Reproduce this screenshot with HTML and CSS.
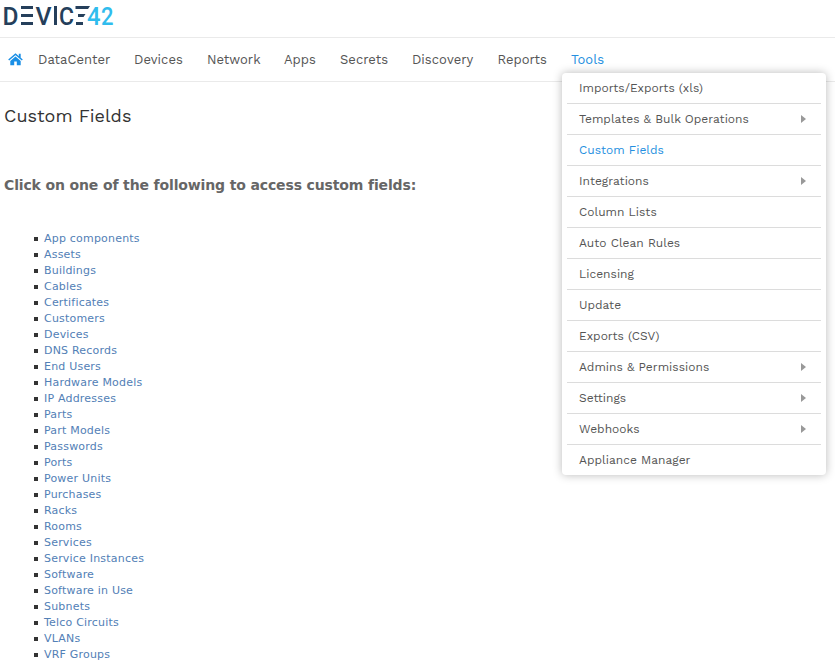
FILE: index.html
```html
<!DOCTYPE html>
<html lang="en">
<head>
<meta charset="utf-8">
<title>Custom Fields</title>
<link rel="stylesheet" href="styles.css">
</head>
<body>
<header class="brand">
  <svg class="logo" width="120" height="34" viewBox="0 0 120 34" role="img" aria-label="Device42">
    <g class="logo-dark">
      <text x="2.500" y="25" textLength="16" lengthAdjust="spacingAndGlyphs">D</text>
      <path d="M21 6h12v3H21zM21 14h12v3H21zM21 22h12v3H21z"/>
      <text x="35.500" y="25" textLength="16" lengthAdjust="spacingAndGlyphs">V</text>
      <path d="M54 6h3V25h-3z"/>
      <text x="59" y="25" textLength="15" lengthAdjust="spacingAndGlyphs">C</text>
      <path d="M75.500 6H90l-2 3H75.500zM78 14h7.500l-2 3H78zM76 22h7v3h-7z"/>
    </g>
    <g class="logo-cyan">
      <text x="87" y="25" textLength="13.500" lengthAdjust="spacingAndGlyphs">4</text>
      <text x="101" y="25" textLength="12.500" lengthAdjust="spacingAndGlyphs">2</text>
    </g>
  </svg>
</header>
<nav class="nav">
  <a class="home" href="#" aria-label="Home"><svg width="15" height="13" viewBox="0 0 15 13"><path d="M7.500 3.600 2.300 7.900V12.200h3.900V8.600h2.600v3.600h3.900V7.900z"/><path class="roof" d="M.700 7 7.500 1.300 14.300 7"/><path d="M10.800.7h1.900v4h-1.900z"/></svg></a>
  <a href="#">DataCenter</a><a href="#">Devices</a><a href="#">Network</a><a href="#">Apps</a><a href="#">Secrets</a><a href="#">Discovery</a><a href="#">Reports</a>
  <div class="tools">
    <a class="active" href="#">Tools</a>
    <ul class="menu">
      <li>Imports/Exports (xls)</li>
      <li class="sub">Templates &amp; Bulk Operations</li>
      <li class="active">Custom Fields</li>
      <li class="sub">Integrations</li>
      <li>Column Lists</li>
      <li>Auto Clean Rules</li>
      <li>Licensing</li>
      <li>Update</li>
      <li>Exports (CSV)</li>
      <li class="sub">Admins &amp; Permissions</li>
      <li class="sub">Settings</li>
      <li class="sub">Webhooks</li>
      <li>Appliance Manager</li>
    </ul>
  </div>
</nav>
<main>
  <h1>Custom Fields</h1>
  <h2>Click on one of the following to access custom fields:</h2>
  <ul class="fields">
    <li><a href="#">App components</a></li>
    <li><a href="#">Assets</a></li>
    <li><a href="#">Buildings</a></li>
    <li><a href="#">Cables</a></li>
    <li><a href="#">Certificates</a></li>
    <li><a href="#">Customers</a></li>
    <li><a href="#">Devices</a></li>
    <li><a href="#">DNS Records</a></li>
    <li><a href="#">End Users</a></li>
    <li><a href="#">Hardware Models</a></li>
    <li><a href="#">IP Addresses</a></li>
    <li><a href="#">Parts</a></li>
    <li><a href="#">Part Models</a></li>
    <li><a href="#">Passwords</a></li>
    <li><a href="#">Ports</a></li>
    <li><a href="#">Power Units</a></li>
    <li><a href="#">Purchases</a></li>
    <li><a href="#">Racks</a></li>
    <li><a href="#">Rooms</a></li>
    <li><a href="#">Services</a></li>
    <li><a href="#">Service Instances</a></li>
    <li><a href="#">Software</a></li>
    <li><a href="#">Software in Use</a></li>
    <li><a href="#">Subnets</a></li>
    <li><a href="#">Telco Circuits</a></li>
    <li><a href="#">VLANs</a></li>
    <li><a href="#">VRF Groups</a></li>
  </ul>
</main>
</body>
</html>
```
FILE: styles.css
```css
* { box-sizing: border-box; }
body { margin: 0; height: 664px; overflow: hidden; background: #fff; color: #333; font: 11px/16px "DejaVu Sans", sans-serif; }
a { text-decoration: none; color: inherit; }
ul { margin: 0; padding: 0; list-style: none; }
.brand { height: 38px; border-bottom: 1px solid #eaeaea; }
.logo { display: block; overflow: visible; font: 500 26.5px Roboto, sans-serif; }
.logo-dark { fill: #253f5b; }
.logo-cyan { fill: #30bced; }
.nav {
  display: grid;
  grid-template-columns: 30px 96px 73px 77px 56px 72px 85.5px 73.5px 1fr;
  height: 44px;
  padding-left: 8px;
  border-bottom: 1px solid #eaeaea;
  font: 13px/43px "Work Sans", Inter, sans-serif;
  letter-spacing: .04px;
  color: #555;
  white-space: nowrap;
}
.home svg { display: block; margin-top: 15px; fill: #1a8fe6; }
.home .roof { fill: none; stroke: #1a8fe6; stroke-width: 1.5; }
.nav .active { color: #258fe0; }
.tools { position: relative; }
.menu {
  position: absolute;
  top: 35px;
  left: -9px;
  width: 264px;
  padding: 0 5px;
  background: #fff;
  border-radius: 4px;
  box-shadow: 0 0 10px rgba(0, 0, 0, .28);
  font-size: 12px;
  line-height: 30px;
  letter-spacing: .02px;
}
.menu li { display: flex; align-items: center; justify-content: space-between; height: 31px; padding: 0 15px 0 12px; border-bottom: 1px solid #dcdcdc; }
.menu li:last-child { height: 30px; border-bottom: 0; }
.sub::after { content: ""; border: solid transparent; border-width: 4px 0 4px 5px; border-left-color: #999; }
h1 { margin: 22px 0 0 4px; font: 400 18px/24px "Work Sans", Inter, sans-serif; letter-spacing: .03px; }
h2 { margin: 47px 0 0 4px; font: 700 14px/20px "DejaVu Sans", sans-serif; letter-spacing: -.14px; color: #666; white-space: nowrap; }
.fields { margin-top: 36px; padding-left: 34px; }
.fields li { display: flex; align-items: center; gap: 6px; height: 16px; }
.fields li::before { content: ""; width: 4px; height: 4px; background: #333; }
.fields a { color: #5280b6; letter-spacing: .2px; }
```
